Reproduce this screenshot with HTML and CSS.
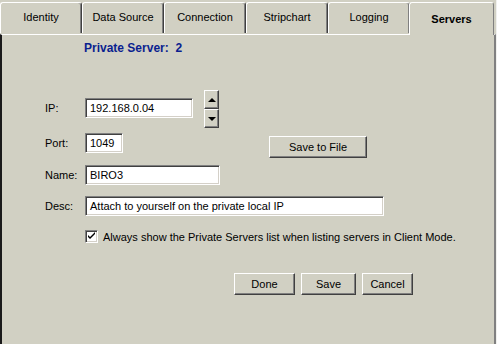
FILE: index.html
```html
<!DOCTYPE html>
<html lang="en">
<head>
    <meta charset="UTF-8">
    <title>Servers</title>
    <link rel="stylesheet" href="styles.css">
</head>
<body>
    <div class="window">
        <!-- tab strip -->
        <div class="tabs">
            <div class="tab">Identity</div>
            <div class="tab">Data Source</div>
            <div class="tab">Connection</div>
            <div class="tab">Stripchart</div>
            <div class="tab">Logging</div>
            <div class="tab active">Servers</div>
        </div>

        <!-- page body -->
        <div class="panel">
            <div class="panel-title">Private Server:&nbsp; 2</div>

            <div class="form">
                <div class="row row-ip">
                    <label class="label">IP:</label>
                    <div class="field field-ip">192.168.0.04</div>
                    <div class="spinner">
                        <div class="spin-btn"><span class="arrow-up"></span></div>
                        <div class="spin-btn"><span class="arrow-down"></span></div>
                    </div>
                </div>
                <div class="row row-port">
                    <label class="label">Port:</label>
                    <div class="field field-port">1049</div>
                    <div class="button btn-file">Save to File</div>
                </div>
                <div class="row row-name">
                    <label class="label">Name:</label>
                    <div class="field field-name">BIRO3</div>
                </div>
                <div class="row row-desc">
                    <label class="label">Desc:</label>
                    <div class="field field-desc">Attach to yourself on the private local IP</div>
                </div>
                <div class="check-row">
                    <div class="checkbox">
                        <svg width="9" height="9" viewBox="0 0 9 9"><path d="M1 3 L3 5 L8 0 L8 2 L3 7 L1 5 Z" fill="#000"/></svg>
                    </div>
                    <span>Always show the Private Servers list when listing servers in Client Mode.</span>
                </div>
            </div>

            <div class="actions">
                <div class="button btn-done">Done</div>
                <div class="button btn-save">Save</div>
                <div class="button btn-cancel">Cancel</div>
            </div>
        </div>
    </div>
</body>
</html>
```

FILE: styles.css
```css
* {
    margin: 0;
    padding: 0;
    box-sizing: border-box;
}

body {
    font-family: "Liberation Sans", Arial, sans-serif;
    font-size: 11px;
    color: #000;
    background: #f0f0ee;
    width: 497px;
    height: 344px;
    overflow: hidden;
}

.window {
    width: 496px;
    height: 344px;
    background: #d1d0c3;
    display: flex;
    flex-direction: column;
}

/* tabs */
.tabs {
    display: flex;
    height: 34px;
    align-items: flex-end;
    background: #d1d0c3;
}

.tab {
    width: 82px;
    height: 31px;
    border-top: 1px solid #fff;
    border-left: 1px solid #fff;
    border-right: 1px solid #404040;
    box-shadow: inset -1px 0 #808080;
    border-top-left-radius: 3px;
    border-top-right-radius: 3px;
    display: flex;
    align-items: center;
    justify-content: center;
    padding-bottom: 2px;
    margin-bottom: 1px;
    position: relative;
}

.tab.active {
    width: 85px;
    height: 33px;
    margin-bottom: -1px;
    margin-left: -1px;
    font-weight: bold;
    padding-bottom: 0;
    border-right: 1px solid #808080;
    box-shadow: none;
    z-index: 1;
    background: #d1d0c3;
}

/* panel */
.panel {
    flex: 1;
    border-top: 1px solid #fff;
    border-left: 2px solid #1a1a1a;
    border-right: 2px solid #808080;
    padding-top: 6px;
}

.panel-title {
    margin-left: 82px;
    font-size: 12px;
    font-weight: bold;
    color: #0a1f8f;
    line-height: 14px;
}

.form {
    margin-top: 43px;
}

.row {
    display: flex;
    align-items: center;
}

.label {
    width: 83px;
    padding-left: 43px;
}

.field {
    height: 20px;
    background: #fff;
    border: 1px solid;
    border-color: #808080 #fff #fff #808080;
    box-shadow: inset 1px 1px #404040, inset -1px -1px #d4d0c8;
    padding: 2px 0 0 4px;
    line-height: 15px;
}

.field-ip {
    width: 108px;
}

.field-port {
    width: 38px;
}

.field-name {
    width: 135px;
}

.field-desc {
    width: 299px;
}

.spinner {
    display: flex;
    flex-direction: column;
    margin: -8px 0 -10px 11px;
}

.spin-btn {
    width: 15px;
    height: 19px;
    border: 1px solid;
    border-color: #fff #404040 #404040 #fff;
    box-shadow: inset -1px -1px #808080;
    display: flex;
    align-items: center;
    justify-content: center;
}

.arrow-up {
    border: 4px solid transparent;
    border-top: 0;
    border-bottom-color: #000;
}

.arrow-down {
    border: 4px solid transparent;
    border-bottom: 0;
    border-top-color: #000;
}

.row-port {
    margin-top: 15px;
    align-items: flex-start;
}

.row-port .label {
    line-height: 20px;
}

.row-name {
    margin-top: 7px;
}

.row-desc {
    margin-top: 11px;
}

.button {
    height: 22px;
    border: 1px solid;
    border-color: #fff #404040 #404040 #fff;
    box-shadow: inset -1px -1px #808080;
    display: flex;
    align-items: center;
    justify-content: center;
}

.btn-file {
    width: 98px;
    margin: 3px 0 0 146px;
}

.check-row {
    display: flex;
    align-items: center;
    margin: 14px 0 0 83px;
}

.checkbox {
    width: 13px;
    height: 13px;
    background: #fff;
    border: 1px solid;
    border-color: #808080 #fff #fff #808080;
    box-shadow: inset 1px 1px #404040, inset -1px -1px #d4d0c8;
    display: flex;
    align-items: center;
    justify-content: center;
    margin-right: 5px;
}

.actions {
    display: flex;
    gap: 6px;
    margin: 30px 0 0 232px;
}

.btn-done {
    width: 61px;
}

.btn-save {
    width: 55px;
}

.btn-cancel {
    width: 51px;
}
```
